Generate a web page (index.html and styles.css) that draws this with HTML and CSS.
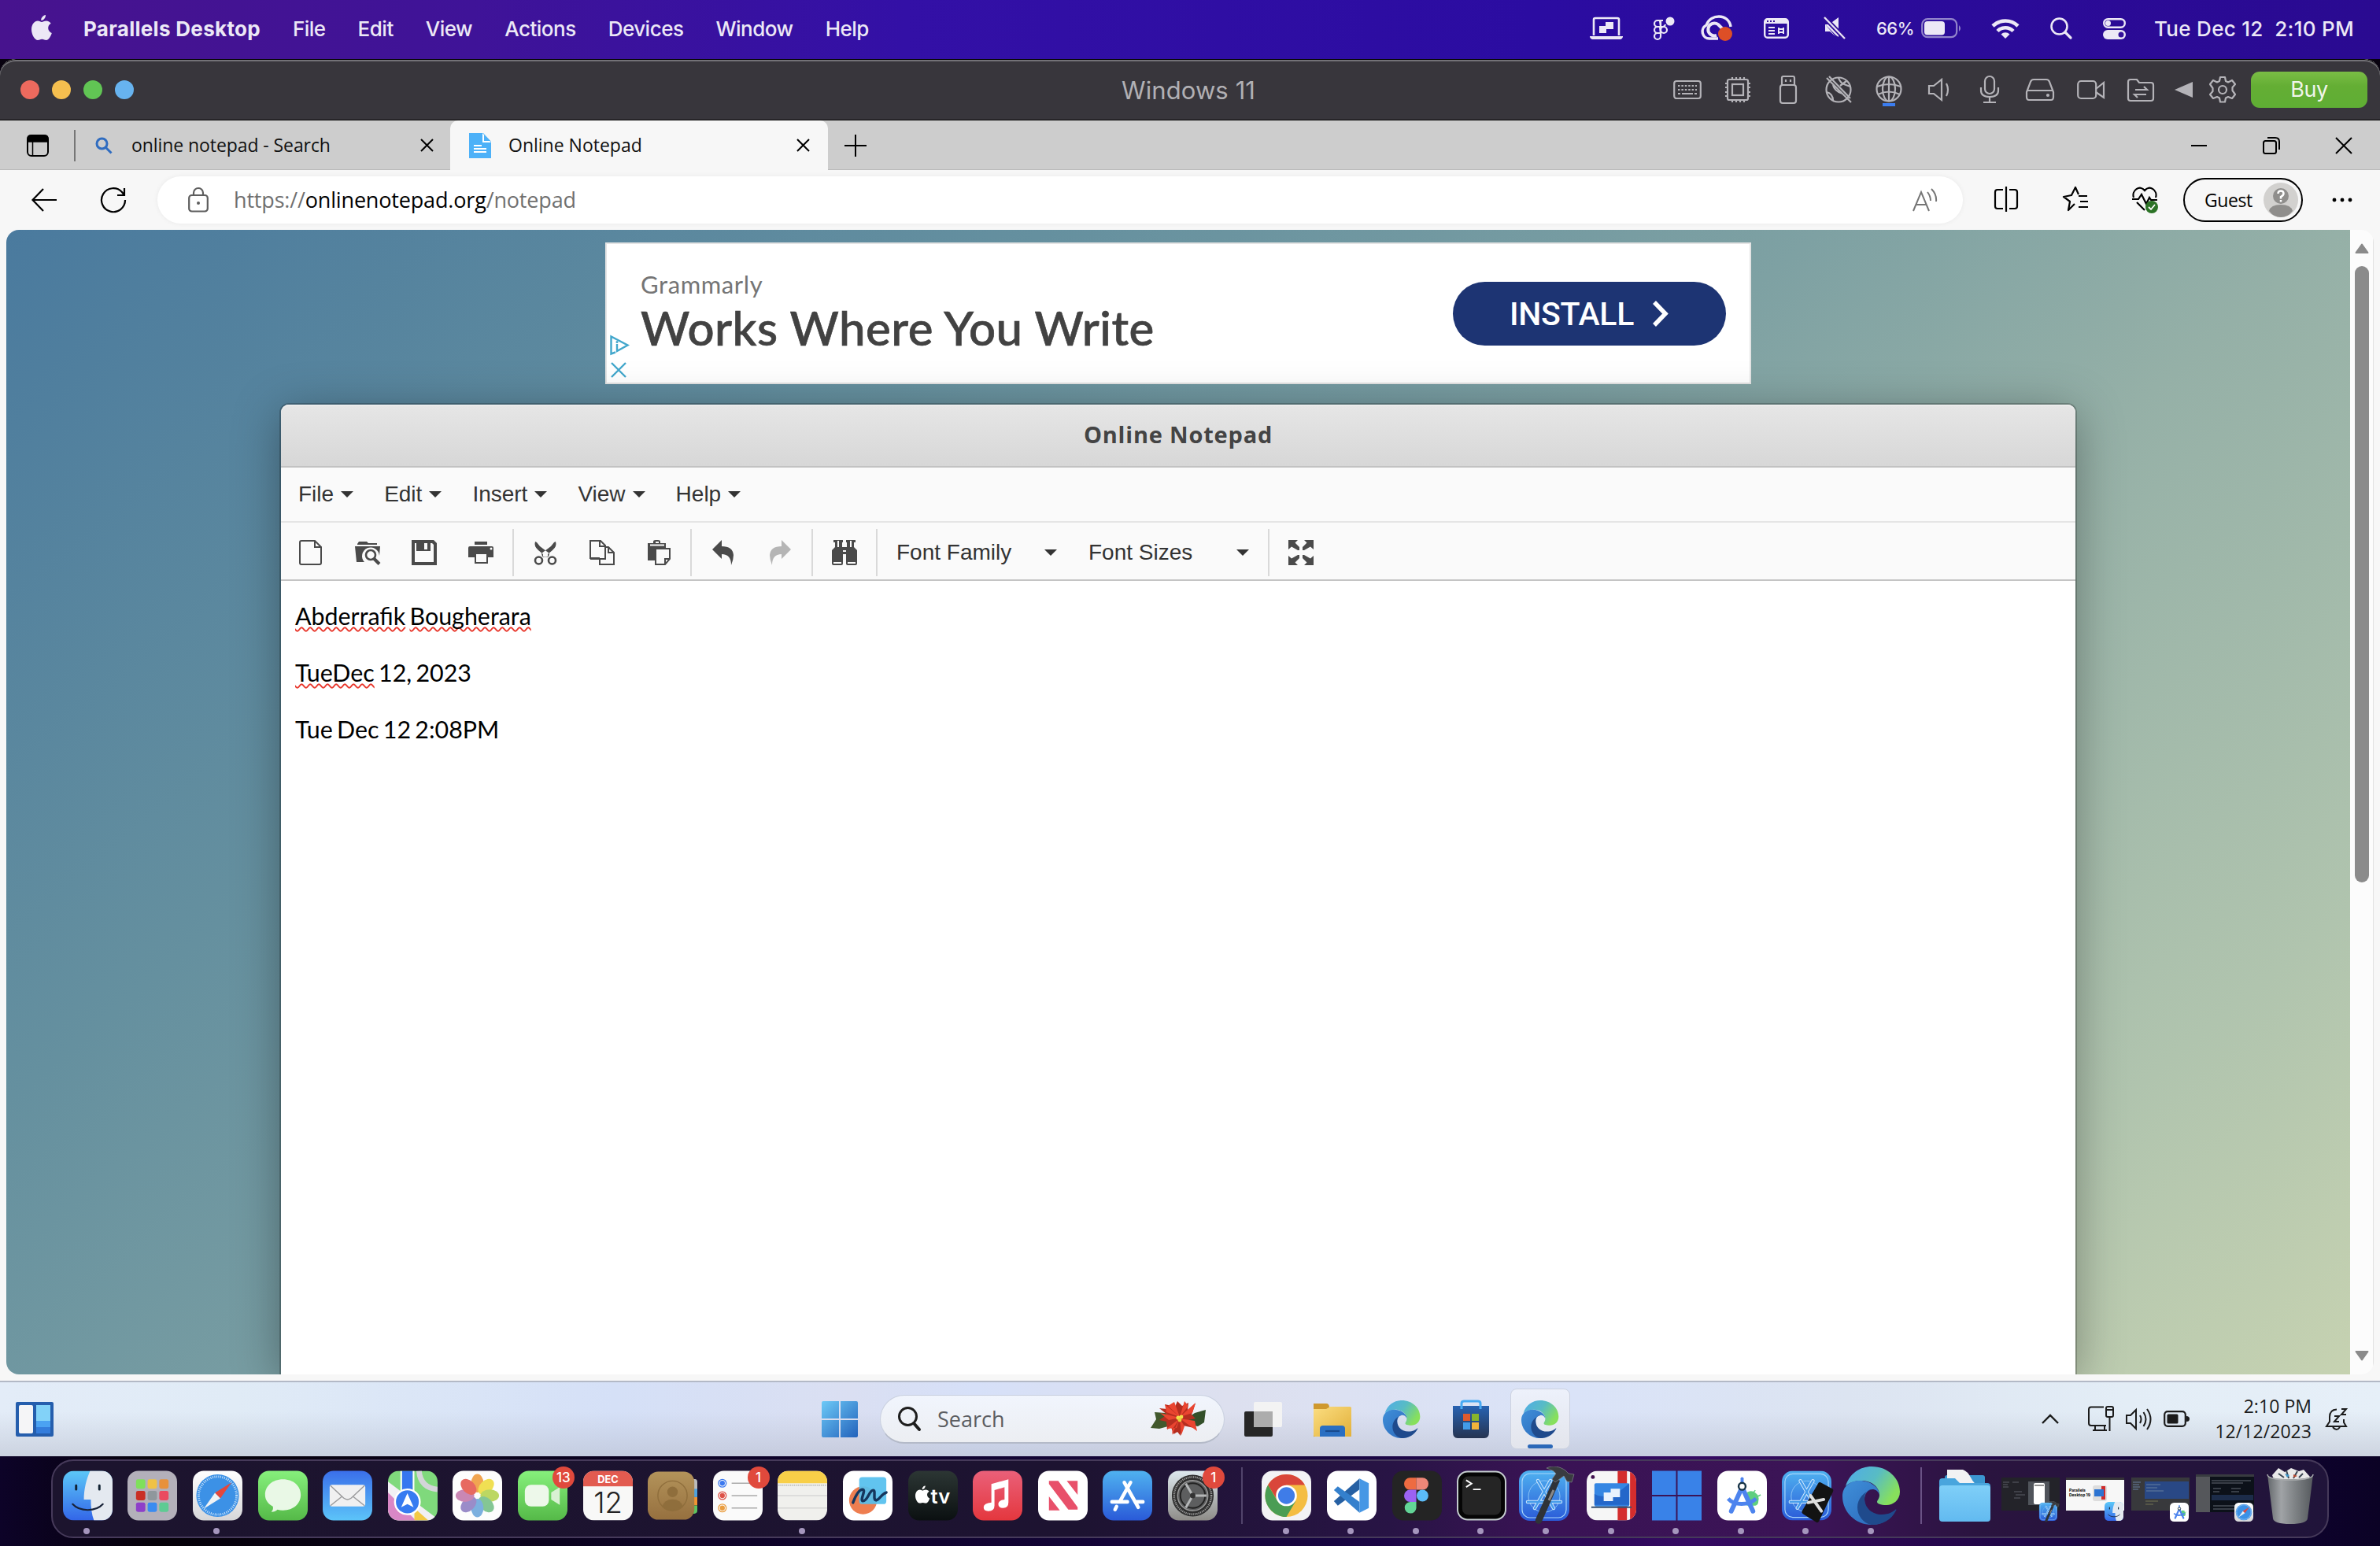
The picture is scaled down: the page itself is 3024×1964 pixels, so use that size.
FILE: index.html
```html
<!DOCTYPE html>
<html lang="en">
<head>
<meta charset="utf-8">
<title>Parallels Desktop - Windows 11</title>
<link rel="stylesheet" href="styles.css">
</head>
<body>
<svg class="defs" width="0" height="0" aria-hidden="true">
  <defs>
    <linearGradient id="gFinder" x1="0" y1="0" x2="0" y2="1"><stop offset="0" stop-color="#5cc8f8"/><stop offset="1" stop-color="#3366e8"/></linearGradient>
    <linearGradient id="gWhite" x1="0" y1="0" x2="0" y2="1"><stop offset="0" stop-color="#fff"/><stop offset="1" stop-color="#d6d6d8"/></linearGradient>
    <linearGradient id="gGreen" x1="0" y1="0" x2="0" y2="1"><stop offset="0" stop-color="#86f07c"/><stop offset="1" stop-color="#55b948"/></linearGradient>
    <linearGradient id="gMail" x1="0" y1="0" x2="0" y2="1"><stop offset="0" stop-color="#3a6fea"/><stop offset="1" stop-color="#5cc4f9"/></linearGradient>
    <linearGradient id="gStore" x1="0" y1="0" x2="0" y2="1"><stop offset="0" stop-color="#4fb2f0"/><stop offset="1" stop-color="#2a5ad8"/></linearGradient>
    <linearGradient id="gMusic" x1="0" y1="0" x2="0" y2="1"><stop offset="0" stop-color="#ea6079"/><stop offset="1" stop-color="#e4373e"/></linearGradient>
    <linearGradient id="gTv" x1="0" y1="0" x2="0" y2="1"><stop offset="0" stop-color="#2c3634"/><stop offset="1" stop-color="#0b1011"/></linearGradient>
    <linearGradient id="gBrown" x1="0" y1="0" x2="0" y2="1"><stop offset="0" stop-color="#b3935a"/><stop offset="1" stop-color="#96703f"/></linearGradient>
    <linearGradient id="gGear" x1="0" y1="0" x2="0" y2="1"><stop offset="0" stop-color="#dde8ee"/><stop offset="1" stop-color="#8e8c88"/></linearGradient>
    <linearGradient id="gWin" x1="0" y1="0" x2="1" y2="1"><stop offset="0" stop-color="#6cc9f7"/><stop offset="1" stop-color="#2362bb"/></linearGradient>
    <linearGradient id="gEdgeTop" x1="0" y1="0" x2="1" y2=".5"><stop offset="0" stop-color="#4fabea"/><stop offset=".55" stop-color="#58bcc4"/><stop offset="1" stop-color="#87e05c"/></linearGradient>
    <linearGradient id="gEdgeLow" x1="0" y1="0" x2="1" y2="1"><stop offset="0" stop-color="#3f8fd9"/><stop offset="1" stop-color="#2a66b8"/></linearGradient>
    <linearGradient id="gFolder" x1="0" y1="0" x2="0" y2="1"><stop offset="0" stop-color="#7fcff8"/><stop offset="1" stop-color="#62baf0"/></linearGradient>
    <linearGradient id="gTrash" x1="0" y1="0" x2="1" y2="0"><stop offset="0" stop-color="#63676b"/><stop offset=".3" stop-color="#a0a3a6"/><stop offset=".6" stop-color="#7f8386"/><stop offset="1" stop-color="#55595d"/></linearGradient>
    <linearGradient id="gYellow" x1="0" y1="0" x2="1" y2="1"><stop offset="0" stop-color="#fbdd80"/><stop offset="1" stop-color="#e2b03a"/></linearGradient>
    <linearGradient id="gBag" x1="0" y1="0" x2="0" y2="1"><stop offset="0" stop-color="#2762b2"/><stop offset="1" stop-color="#263451"/></linearGradient>
    <clipPath id="tile"><rect width="64" height="64" rx="14"/></clipPath>
  </defs>
  <symbol id="i-finder" viewBox="0 0 64 64"><g clip-path="url(#tile)"><rect width="64" height="64" fill="url(#gFinder)"/><path d="M35 0C30 12 27 24 27 37h9c0 10 1 19 4 27h24V0z" fill="#e4e9f0"/></g><path d="M17 19v5M47 19v5" stroke="#123" stroke-width="3" stroke-linecap="round"/><path d="M12.500 43c9 10 30 10 39 0" fill="none" stroke="#182238" stroke-width="2.200" stroke-linecap="round"/></symbol>
  <symbol id="i-safari" viewBox="0 0 64 64"><rect width="64" height="64" rx="14" fill="url(#gWhite)"/><circle cx="32" cy="32" r="27.500" fill="#3c91e6"/><circle cx="32" cy="32" r="24.500" fill="none" stroke="#cfe6fb" stroke-width="3" stroke-dasharray="1 1.570"/><path d="M50 15 35.500 35.500 28.500 28.500z" fill="#e4473c"/><path d="M14 49 28.500 28.500 35.500 35.500z" fill="#f1f3f5"/></symbol>
  <symbol id="i-edge" viewBox="0 0 74 74"><path d="M4 25C9 9 22 0 37 0c21 0 36 15 36 32 0 11-9 17-17 17-8 0-12-2-12-4 0-2 3-4 3-9 0-8-8-18-23-18-9 0-16 3-20 7z" fill="url(#gEdgeTop)"/><path d="M0 38C0 25 10 18 22 18c14 0 25 9 25 18-2-6-6-7-9-7-6 0-10 6-10 13 0 14 10 24 24 24 3 0 6-1 8-2-6 7-14 10-23 10C17 74 0 58 0 38z" fill="url(#gEdgeLow)"/><path d="M28 40c0 13 10 21 22 21 9 0 15-4 17-6 1-1 2 0 1 1-6 12-17 18-31 18-11-2-18-12-18-22 0-11 8-20 19-23-6 0-10 5-10 11z" fill="#1f4a8c"/></symbol>
  <symbol id="i-xblue" viewBox="0 0 64 64"><rect width="64" height="64" rx="14" fill="url(#gStore)"/><rect x="4" y="4" width="56" height="56" rx="10" fill="none" stroke="#a8d6fa" stroke-width="1.200"/><circle cx="32" cy="33" r="20" fill="none" stroke="#8ac2f5"/><path d="M24 13l20 35M40 13 20 48M11 40h42" stroke="#cfe8fd" stroke-width="4.500" stroke-linecap="round"/><path d="M24 13l20 35M40 13 20 48M11 40h42" stroke="#469ceb" stroke-width="2.500" stroke-linecap="round"/></symbol>
  <symbol id="i-xcode" viewBox="0 0 74 74"><use href="#i-xblue" x="2" y="5" width="64" height="64"/><path d="M47 14 23 67c-2 6 6 8 8 3L54 18z" fill="#2f3338"/><path d="M46 30 40 43" stroke="#888" stroke-width="3"/><path d="M37 2c8-4 17-2 24 3l4 4 7 1-3 10-6-1-4-7-11 8-4-4 5-7c-3-4-7-5-12-7z" fill="#393c40" stroke="#83868a" stroke-width=".7"/></symbol>
  <symbol id="i-android" viewBox="0 0 64 64"><rect width="64" height="64" rx="14" fill="#fff"/><path d="M38 28a10 10 0 0 1 15 11c0 3-1 5-4 6L38 45z" fill="#5fcf80"/><path d="M46 29l3-4M52 33l4-2" stroke="#5fcf80" stroke-width="1.500"/><path d="M32 21 18 52M32 21l14 31" stroke="#4d84ee" stroke-width="6" stroke-linecap="round"/><path d="M14 36c8 9 26 9 36 0" fill="none" stroke="#4d84ee" stroke-width="5"/><path d="M32 10v6" stroke="#4d84ee" stroke-width="4" stroke-linecap="round"/><circle cx="32" cy="20" r="4.500" fill="#fff" stroke="#183447" stroke-width="2.500"/></symbol>
  <symbol id="i-apple" viewBox="0 0 26 32"><path d="M18 0c.3 3.400-2.600 7-5.700 7C11.800 3.800 15 .4 18 0zM13 9c1.200 0 3-1.500 5.800-1.500 2.500 0 4.700 1.300 5.900 3.200-5.200 3-4.300 10 1.100 12.200C24.700 26.500 21.700 32 18.700 32c-2 0-2.900-1.300-5.300-1.300S10 32 8 32C4.300 32 0 25 0 18.500c0-6.800 4-11 8-11 2.300 0 3.800 1.500 5 1.500z" fill="currentColor"/></symbol>
  <symbol id="i-caret" viewBox="0 0 16 8"><path d="M0 0h16L8 8z" fill="#333"/></symbol>
</svg>

<header class="menubar">
  <svg class="apple" width="26" height="32"><use href="#i-apple"/></svg>
  <nav class="mac-menus"><b>Parallels Desktop</b><span>File</span><span>Edit</span><span>View</span><span>Actions</span><span>Devices</span><span>Window</span><span>Help</span></nav>
  <div class="mac-status">
    <svg width="42" height="28" viewBox="0 0 42 28"><path d="M5 23V3q0-2 2-2h28q2 0 2 2v20" fill="none" stroke="#ece8f6" stroke-width="2.600"/><path d="M0 24h42v1q-1 3-3 3H3q-2 0-3-3z" fill="#ece8f6"/><path d="M20 6h10v9h-9v5h-9v-9h8z" fill="#ece8f6"/></svg>
    <svg width="28" height="30" viewBox="0 0 28 30"><g fill="none" stroke="#ece8f6" stroke-width="2.200"><path d="M9 5H6a4 4 0 0 0 0 8h4zM9 13H6a4 4 0 0 0 0 8h4zM10 21H6a4 4 0 1 0 4 4zM10 5h3M10 13h3a4 4 0 0 0 3-3M10 5v20"/><circle cx="14" cy="17" r="4"/></g><circle cx="22" cy="6" r="5.500" fill="#ece8f6"/></svg>
    <svg width="42" height="34" viewBox="0 0 42 34"><path d="M22 30H11a9 9 0 0 1-4-17C10 5 17 2 23 2c8 0 14 5 15 13" fill="none" stroke="#ece8f6" stroke-width="3.500"/><path d="M20 26a8 8 0 1 1 2-14l9 9" fill="none" stroke="#ece8f6" stroke-width="4"/><circle cx="31" cy="24" r="9" fill="#dd4f26"/></svg>
    <svg width="32" height="26" viewBox="0 0 32 26"><rect x="1.200" y="1.200" width="29.600" height="23.600" rx="3.500" fill="none" stroke="#ece8f6" stroke-width="2.400"/><path d="M1 2h30v5H1z" fill="#ece8f6"/><path d="M4 4h2m2 0h2m2 0h2" stroke="#33109a" stroke-width="2"/><path d="M6 12h8M6 16h8M6 20h8M19 12v8M25 12v8M18 14h8M18 18h8" stroke="#ece8f6" stroke-width="2"/></svg>
    <svg width="30" height="28" viewBox="0 0 30 28"><path d="M3 9h5L20 0v25l-3-2L3 9zM3 9v9h6l7 6" fill="#ece8f6"/><path d="M2 0l26 27" stroke="#33109a" stroke-width="6"/><path d="M2 0l26 27" stroke="#ece8f6" stroke-width="2.200"/></svg>
    <span class="pct">66%</span>
    <svg width="52" height="26" viewBox="0 0 52 26"><rect x="1.200" y="1.200" width="44" height="23" rx="7" fill="none" stroke="#9284cb" stroke-width="2.200"/><rect x="4" y="4" width="26" height="17.500" rx="4" fill="#ece8f6"/><path d="M48 9q4 4 0 8z" fill="#9284cb"/></svg>
    <svg width="36" height="26" viewBox="0 0 36 26"><g fill="none" stroke="#ece8f6" stroke-width="4.600"><path d="M2 10a23 23 0 0 1 32 0M8 16.500a14 14 0 0 1 20 0"/></g><path d="M12.500 20.500a8 8 0 0 1 11 0L18 26z" fill="#ece8f6"/></svg>
    <svg width="28" height="28" viewBox="0 0 28 28"><circle cx="11.500" cy="11.500" r="10" fill="none" stroke="#ece8f6" stroke-width="2.600"/><path d="M19 19l7 7" stroke="#ece8f6" stroke-width="3.200" stroke-linecap="round"/></svg>
    <svg width="29" height="27" viewBox="0 0 29 27"><rect x="1.200" y="1.200" width="26.600" height="10.500" rx="5.200" fill="none" stroke="#ece8f6" stroke-width="2.400"/><circle cx="6.500" cy="6.500" r="3.500" fill="#ece8f6"/><rect y="15" width="29" height="12" rx="6" fill="#ece8f6"/><circle cx="23" cy="21" r="3.500" fill="#33109a"/></svg>
    <span class="clock">Tue Dec 12&nbsp; 2:10 PM</span>
  </div>
</header>

<main class="vm">
  <div class="vm-title">
    <div class="lights"><i class="r"></i><i class="y"></i><i class="g"></i><i class="b"></i></div>
    <span class="vm-name">Windows 11</span>
    <div class="vm-tools">
      <svg viewBox="0 0 36 36"><rect x="1.200" y="7" width="33.600" height="22" rx="3" /><path d="M6 13h24M6 18h24" stroke-dasharray="2.500 1.900"/><path d="M6 23h3M11 23h14M27 23h3"/></svg>
      <svg viewBox="0 0 36 36"><rect x="5" y="5" width="26" height="26" rx="2"/><rect x="11" y="11" width="14" height="14"/><path d="M11 2v3M16 2v3M21 2v3M26 2v3M11 31v3M16 31v3M21 31v3M26 31v3M2 10h3M2 15h3M2 21h3M2 26h3M31 10h3M31 15h3M31 21h3M31 26h3"/></svg>
      <svg viewBox="0 0 36 36"><rect x="8" y="12" width="20" height="23" rx="3"/><path d="M10 12V3q0-2 2-2h12q2 0 2 2v9M15 5v3M21 5v3"/></svg>
      <svg viewBox="0 0 36 36"><circle cx="18" cy="18" r="15.500"/><path d="M3 3l31 31M6 1l27 28M18 3q2 6 7 8t8 3M11 12q2 8 12 11M3 21q8 2 8 11M20 13l8-6"/></svg>
      <svg viewBox="0 0 36 36"><circle cx="18" cy="17" r="15.500"/><ellipse cx="18" cy="17" rx="8" ry="15.500"/><path d="M18 2v30M3 14q15-6 30 0M4 24q14-7 28 0"/><path d="M10 37h16" stroke="#3b7df0" stroke-width="4"/></svg>
      <svg viewBox="0 0 36 36"><path d="M5 13h6l10-8v26l-10-8H5zM27 10q4 8 0 16"/></svg>
      <svg viewBox="0 0 36 36"><rect x="12" y="1" width="12" height="22" rx="6"/><path d="M7 15v4q0 8 11 8t11-8v-4M18 27v6M10 34h16"/></svg>
      <svg viewBox="0 0 36 36"><path d="M1 21 6 8q1-3 4-3h16q3 0 4 3l5 13v6q0 4-3 4H4q-3 0-3-4zM1 19h34"/><circle cx="28" cy="25" r="1"/></svg>
      <svg viewBox="0 0 36 36"><rect x="2.200" y="7" width="23" height="22" rx="4"/><path d="M25 17l10-8v19l-10-7"/></svg>
      <svg viewBox="0 0 36 36"><path d="M2 8q0-3 3-3h8l3 4h15q3 0 3 3v17q0 3-3 3H5q-3 0-3-3zM11 18h15l-4-4M25 24H10l4 4"/></svg>
    </div>
    <svg class="tri" width="23" height="20" viewBox="0 0 23 20"><path d="M0 10 23 0v20z" fill="#b4b3b8"/></svg>
    <svg class="gear" width="36" height="36" viewBox="0 0 36 36"><path d="M15 2h6l1 5 3 1.500 5-2.500 4 5-3.500 4v4L34 24l-4 5-5-2-3 1.500-1 5h-6l-1-5-3-1.500-5 2-4-5 3.500-4v-4L2 11l4-5 5 2.500L14 7z" fill="none" stroke="#b4b3b8" stroke-width="2.200" stroke-linejoin="round"/><circle cx="18" cy="18" r="5" fill="none" stroke="#b4b3b8" stroke-width="2.200"/></svg>
    <button class="buy">Buy</button>
  </div>

  <div class="tabs">
    <svg class="tab-actions" width="28" height="28" viewBox="0 0 28 28"><rect x="1" y="1" width="26" height="26" rx="5" fill="none" stroke="#000" stroke-width="2"/><path d="M1 9V5q0-4 4-4h18q4 0 4 4v4zM7.500 9v18" stroke="#000" stroke-width="1.500"/></svg>
    <div class="tab-sep"></div>
    <div class="tab idle">
      <svg width="22" height="22" viewBox="0 0 22 22"><circle cx="8.500" cy="8.500" r="6.500" fill="none" stroke="#2f6cc0" stroke-width="3"/><path d="M13 13l7.500 7.500" stroke="#2f6cc0" stroke-width="3"/></svg>
      <span>online notepad - Search</span>
      <svg class="x" width="17" height="17" viewBox="0 0 17 17"><path d="M1 1l15 15M16 1 1 16" stroke="#000" stroke-width="2"/></svg>
    </div>
    <div class="tab active">
      <svg width="30" height="32" viewBox="0 0 30 32"><path d="M1 0h18l10 11v21H1z" fill="#4db1f8"/><path d="M18 0v12h11" fill="#fff"/><path d="M20 2l8 8h-8z" fill="#4db1f8"/><path d="M7 16h10M7 20h16M7 24h16" stroke="#fff" stroke-width="2"/></svg>
      <span>Online Notepad</span>
      <svg class="x" width="17" height="17" viewBox="0 0 17 17"><path d="M1 1l15 15M16 1 1 16" stroke="#000" stroke-width="2"/></svg>
    </div>
    <svg class="plus" width="28" height="28" viewBox="0 0 28 28"><path d="M14 0v28M0 14h28" stroke="#000" stroke-width="2"/></svg>
    <div class="win-buttons">
      <svg width="22" height="22" viewBox="0 0 22 22"><path d="M1 11h20" stroke="#000" stroke-width="2"/></svg>
      <svg width="22" height="22" viewBox="0 0 22 22"><rect x="1" y="5" width="16" height="16" rx="2.500" fill="none" stroke="#000" stroke-width="2"/><path d="M6 1h10q5 0 5 5v10" fill="none" stroke="#000" stroke-width="2"/></svg>
      <svg width="22" height="22" viewBox="0 0 22 22"><path d="M1 1l20 20M21 1 1 21" stroke="#000" stroke-width="2"/></svg>
    </div>
  </div>

  <div class="address">
    <svg class="nav" width="32" height="30" viewBox="0 0 32 30"><path d="M15 1 1.500 15 15 29M2 15h30" fill="none" stroke="#000" stroke-width="2.200"/></svg>
    <svg class="nav2" width="32" height="32" viewBox="0 0 32 32"><path d="M31 16A15 15 0 1 1 27 6l3 4M30 1v9h-9" fill="none" stroke="#000" stroke-width="2.200"/></svg>
    <div class="url">
      <svg width="26" height="32" viewBox="0 0 26 32"><rect x="1.200" y="10" width="23.600" height="20.500" rx="3.500" fill="none" stroke="#5e5e5e" stroke-width="2.200"/><path d="M7 10V7a6 6 0 0 1 12 0v3" fill="none" stroke="#5e5e5e" stroke-width="2.200"/><circle cx="13" cy="20" r="2" fill="#5e5e5e"/></svg>
      <span>https://<em>onlinenotepad.org</em>/notepad</span>
      <svg class="read" width="32" height="30" viewBox="0 0 32 30"><path d="M1 29 11 5l10 24M5 21h12M19 5q4 5 4 11M24 1q7 7 6 16" fill="none" stroke="#757575" stroke-width="2"/></svg>
    </div>
    <div class="edge-tools">
      <svg width="32" height="32" viewBox="0 0 32 32"><path d="M12 4H5Q2 4 2 7v18q0 3 3 3h7M20 4h7q3 0 3 3v18q0 3-3 3h-7M16 0v32" fill="none" stroke="#000" stroke-width="2.200"/></svg>
      <svg width="32" height="32" viewBox="0 0 32 32"><path d="M20 12h11M22 19h10M20 26h12M15 22l-8 8 2-11-8-6 10-2 5-10 4 9" fill="none" stroke="#000" stroke-width="2.200" stroke-linejoin="round"/></svg>
      <svg width="34" height="34" viewBox="0 0 34 34"><path d="M2 14C-1 5 10-3 16 5c6-8 17 0 14 9M6 20l10 10M0 16h8l4-6 6 12 4-8 2 3h8" fill="none" stroke="#000" stroke-width="2.200"/><circle cx="25" cy="26" r="8" fill="#2c7326"/><path d="M21 26l3 3 5-6" fill="none" stroke="#fff" stroke-width="1.800"/></svg>
    </div>
    <div class="guest"><span>Guest</span><svg width="44" height="44" viewBox="0 0 44 44"><circle cx="22" cy="22" r="22" fill="#d2d1cf"/><circle cx="22" cy="17" r="10" fill="#8f8e8c"/><path d="M7 36q2-8 15-8t15 8q-6 8-15 8T7 36z" fill="#8f8e8c"/><path d="M18.500 14q0-3.500 3.500-3.500t3.500 3.500q0 2-3.500 4v2.500M22 22v2.500" fill="none" stroke="#fff" stroke-width="2.500"/></svg></div>
    <svg class="dots" width="26" height="6" viewBox="0 0 26 6"><circle cx="3" cy="3" r="2.400"/><circle cx="13" cy="3" r="2.400"/><circle cx="23" cy="3" r="2.400"/></svg>
  </div>

  <div class="viewport">
    <div class="page">
      <div class="ad">
        <div class="ad-choice">
          <svg width="24" height="25" viewBox="0 0 24 25"><path d="M7 21.500 1.500 23.500v-22l21 11L9 20V11" fill="none" stroke="#42a7cc" stroke-width="2.400"/><circle cx="9" cy="8.500" r="1.500" fill="#42a7cc"/></svg>
          <svg width="20" height="20" viewBox="0 0 20 20"><path d="M1 1l18 18M19 1 1 19" stroke="#42a7cc" stroke-width="2.400"/></svg>
        </div>
        <div class="ad-copy"><span>Grammarly</span><strong>Works Where You Write</strong></div>
        <button class="install"><span>INSTALL</span><svg width="21" height="33" viewBox="0 0 21 33"><path d="M3 2l14 14.500L3 31" fill="none" stroke="#fff" stroke-width="5.500"/></svg></button>
      </div>

      <section class="notepad">
        <h1>Online Notepad</h1>
        <nav class="np-menu">
          <span>File<svg><use href="#i-caret"/></svg></span><span>Edit<svg><use href="#i-caret"/></svg></span><span>Insert<svg><use href="#i-caret"/></svg></span><span>View<svg><use href="#i-caret"/></svg></span><span>Help<svg><use href="#i-caret"/></svg></span>
        </nav>
        <div class="np-tools">
          <div class="grp">
            <svg viewBox="0 0 32 32"><path d="M4 1h17l8 8v20q0 2-2 2H4q-2 0-2-2V3q0-2 2-2zM21 1v8h8" fill="none" stroke="#4a4a4a" stroke-width="2"/></svg>
            <svg viewBox="0 0 32 32"><path d="M3 5 5 2h10l2 2h11v2H3zM0 8h32l-1 12a11 11 0 1 0-19 8H2z" fill="#4a4a4a"/><circle cx="20" cy="19" r="6" fill="none" stroke="#4a4a4a" stroke-width="2.600"/><path d="M24 23.500l7 7" stroke="#4a4a4a" stroke-width="4"/></svg>
            <svg viewBox="0 0 32 32"><path d="M0 0h28l4 4v28H0z" fill="#4a4a4a"/><path d="M4 4h2v10h18V4h2l2 2v22H4z" fill="#fafafa"/><path d="M16 4h4v8h-4z" fill="#fafafa"/></svg>
            <svg viewBox="0 0 32 32"><path d="M8 2h16v4H8zM2 8h28q2 0 2 2v12h-7v8H8v-8H0V10q0-2 2-2z" fill="#4a4a4a"/><path d="M10 18h13v10H10z" fill="#fafafa"/><circle cx="29" cy="11" r="1.500" fill="#fff"/></svg>
          </div>
          <div class="grp">
            <svg viewBox="0 0 32 32"><path d="M3 2q-2 6 4 11l6 5v4l7-1 1-4L9 8 5 3zM29 2q2 6-4 11l-6 5v4l-7-1-1-4L23 8l4-5z" fill="#4a4a4a"/><circle cx="16" cy="17.500" r="2.500" fill="#fafafa"/><ellipse cx="7.500" cy="26" rx="4.500" ry="4.500" fill="none" stroke="#4a4a4a" stroke-width="2.600"/><circle cx="24.500" cy="26" r="4.500" fill="none" stroke="#4a4a4a" stroke-width="2.600"/></svg>
            <svg viewBox="0 0 32 32"><path d="M13 23H1V1h13l6 6v2M13 1v7h7M20 9v15H13v7h18V16l-7-7zM1 24h12M24 9v7h7" fill="none" stroke="#4a4a4a" stroke-width="2"/></svg>
            <svg viewBox="0 0 32 32"><path d="M2 4h7V2q0-2 3-2h3q3 0 3 2v2h7v6H12v16H2z" fill="#4a4a4a"/><path d="M5 6.500h18M12 3h4" stroke="#fafafa" stroke-width="2"/><path d="M14 11h16v13l-6 7H12V11zM30 24h-6v7" fill="#fafafa" stroke="#4a4a4a" stroke-width="2"/></svg>
          </div>
          <div class="grp">
            <svg viewBox="0 0 32 32"><path d="M2 12 14 0v8q14 0 15 11 0 6-3 13 0-14-12-14v6z" fill="#4a4a4a"/></svg>
            <svg viewBox="0 0 32 32"><path d="M30 12 18 0v8Q4 8 3 19q0 6 3 13 0-14 12-14v6z" fill="#b5b5b5"/></svg>
          </div>
          <div class="grp">
            <svg viewBox="0 0 32 32"><path d="M2 0h12v3h-1v6h6V3h-1V0h12v3h-2v6l4 4v17q0 2-2 2H20q-2 0-2-2V18h-4v12q0 2-2 2H2q-2 0-2-2V13l4-4V3H2z" fill="#4a4a4a"/><path d="M14 13h4v2h-4zM2 28h10v2H2zM20 28h10v2H20zM7 1h2v8H7zM23 1h2v8h-2z" fill="#fafafa"/></svg>
          </div>
          <div class="grp selects"><span class="sel fam">Font Family<svg><use href="#i-caret"/></svg></span><span class="sel siz">Font Sizes<svg><use href="#i-caret"/></svg></span></div>
          <div class="grp">
            <svg viewBox="0 0 32 32"><path d="M0 0h12L8.500 3.500 14 9v4H12L4 8.500 0 12zM32 0H20l3.500 3.500L18 9v4h2l8-4.500L32 12zM0 32h12l-3.500-3.500L14 23v-4h-2l-8 4.500L0 20zM32 32H20l3.500-3.500L18 23v-4h2l8 4.500L32 20z" fill="#4a4a4a"/></svg>
          </div>
        </div>
        <div class="np-body">
          <p><u>Abderrafik</u> <u>Bougherara</u></p>
          <p><u>TueDec</u> 12, 2023</p>
          <p>Tue Dec 12 2:08PM</p>
        </div>
      </section>
    </div>
    <div class="scroll">
      <svg width="18" height="13" viewBox="0 0 18 13"><path d="M9 1.500 16.500 12h-15z" fill="#8b8b8b" stroke="#8b8b8b" stroke-width="2" stroke-linejoin="round"/></svg>
      <div class="thumb"></div>
      <svg class="down" width="18" height="13" viewBox="0 0 18 13"><path d="M9 11.500 16.500 1h-15z" fill="#8b8b8b" stroke="#8b8b8b" stroke-width="2" stroke-linejoin="round"/></svg>
    </div>
  </div>

  <footer class="taskbar">
    <div class="widgets"><svg width="48" height="44" viewBox="0 0 48 44"><rect width="48" height="44" rx="2" fill="#255ead"/><rect x="4" y="4" width="18" height="36" rx="2" fill="#f5f5f7"/><path d="M26 4h18v20H26z" fill="#82d2f8"/><path d="M26 24h18v8H26z" fill="#4ba2f2"/><path d="M26 32h18v8H26z" fill="#347ddc"/></svg></div>
    <div class="pins">
      <svg width="46" height="46" viewBox="0 0 46 46"><path d="M2 0h20v22H0V2q0-2 2-2zM24 0h20q2 0 2 2v20H24zM0 24h22v22H2q-2 0-2-2zM24 24h22v20q0 2-2 2H24z" fill="url(#gWin)"/></svg>
      <div class="search">
        <svg width="29" height="31" viewBox="0 0 29 31"><circle cx="12.500" cy="12.500" r="11" fill="none" stroke="#1e1e1e" stroke-width="3"/><path d="M20 21l7 8" stroke="#1e1e1e" stroke-width="4" stroke-linecap="round"/></svg>
        <span>Search</span>
        <svg width="70" height="45" viewBox="0 0 70 45"><path d="M0 34l7-11-2-9 14 1 10 8-7 9-11 3z" fill="#41582c"/><path d="M70 11l-2 16-8 5-10-2-4-8 10-7z" fill="#33502a"/><path d="M18 4l13 3 3-7 6 6 8-4-1 9 10-8-5 14 5 5-9 2 7 10-14-3-3 13-4-5-5 3-3-9-5 3-1-10-9-2 10-7-10-8 10 1z" fill="#b52e20"/><path d="M37 20 30 1l-8 5zM37 20 43 0l5 6zM37 20 57 2l-4 13zM37 21 12 15l11 9zM37 22l22 16-3-13zM37 22 20 35l13-1zM37 22l2 21 4-11zM37 22l-10 21 1-8zM37 20 18 4l2 10z" fill="#ea4530"/><circle cx="35" cy="21" r="2.600" fill="#f3e04a"/><circle cx="39" cy="20" r="2.400" fill="#f3e04a"/><circle cx="37" cy="24" r="2.400" fill="#e5cf3b"/></svg>
      </div>
      <svg width="48" height="44" viewBox="0 0 48 44"><rect y="12" width="36" height="32" rx="2" fill="#262626"/><rect x="12" width="36" height="32" rx="2" fill="#f3f3f3"/><path d="M12 12h24v20H12z" fill="#acacac"/></svg>
      <svg width="48" height="44" viewBox="0 0 48 44"><path d="M0 2h16q4 0 4 5h28v37H0z" fill="#cf982d"/><path d="M0 9h16l5-3h25q2 0 2 2v36H2q-2 0-2-2z" fill="url(#gYellow)"/><path d="M8 44V34q0-4 4-4h24q4 0 4 4v10z" fill="#2a6fc2"/><path d="M15 37h18" stroke="#174a8e" stroke-width="2.200"/></svg>
      <svg width="48" height="48"><use href="#i-edge"/></svg>
      <svg width="46" height="48" viewBox="0 0 46 48"><path d="M0 7h46v33q0 8-6 8H6q-6 0-6-8z" fill="url(#gBag)"/><path d="M11 11V4q0-3 3-3h18q3 0 3 3v7" fill="none" stroke="#48a9f3" stroke-width="3"/><path d="M13 17h9v9h-9z" fill="#df5a2d"/><path d="M24 17h9v9h-9z" fill="#87b52c"/><path d="M13 28h9v9h-9z" fill="#439ce8"/><path d="M24 28h9v9h-9z" fill="#f0b43b"/></svg>
      <div class="pin-active"><svg width="48" height="48"><use href="#i-edge"/></svg><i></i></div>
    </div>
    <div class="tray">
      <svg width="22" height="12" viewBox="0 0 22 12"><path d="M1 11 11 1l10 10" fill="none" stroke="#1b1b1b" stroke-width="2.400"/></svg>
      <svg class="mon" width="33" height="33" viewBox="0 0 33 33"><path d="M20 1.500H4q-3 0-3 3V22q0 3 3 3h19M9 25v5M21 25v5M6 31h18M27.500 14v18M23 3q0-2 2-2h5q2 0 2 2v9q0 2-2 2h-5q-2 0-2-2zM23 5h9" fill="none" stroke="#1b1b1b" stroke-width="2"/></svg>
      <svg width="34" height="28" viewBox="0 0 34 28"><path d="M1 9h5l7-7v24l-7-7H1zM18 9q3 5 0 10M22.500 5q6 9 0 18M27 1q9 13 0 26" fill="none" stroke="#1b1b1b" stroke-width="2"/></svg>
      <svg width="33" height="21" viewBox="0 0 33 21"><rect x="1.200" y="1.200" width="26.600" height="18.600" rx="4" fill="none" stroke="#1b1b1b" stroke-width="2.200"/><rect x="4.500" y="4.500" width="14" height="12" rx="1.500" fill="#1b1b1b"/><path d="M29 7q4 0 4 3.500T29 14z" fill="#1b1b1b"/></svg>
      <div class="time"><span>2:10 PM</span><span>12/12/2023</span></div>
      <svg width="28" height="30" viewBox="0 0 28 30"><path d="M14 2.500Q5 3 5 12v6l-4 6h25l-3-5v-4M9 25q5 6 9 0M11 11h6l-6 7h6M20 2h6l-6 7h6" fill="none" stroke="#1b1b1b" stroke-width="2"/></svg>
    </div>
  </footer>
</main>

<footer class="dock-area">
  <div class="dock">
    <div class="app on"><svg><use href="#i-finder"/></svg></div>
    <div class="app"><svg viewBox="0 0 64 64"><rect width="64" height="64" rx="14" fill="#b3b0ba"/><g><rect x="11" y="11" width="12" height="12" rx="2.500" fill="#7fe05b"/><rect x="26" y="11" width="12" height="12" rx="2.500" fill="#f0c244"/><rect x="41" y="11" width="12" height="12" rx="2.500" fill="#e8913a"/><rect x="11" y="26" width="12" height="12" rx="2.500" fill="#c92f25"/><rect x="26" y="26" width="12" height="12" rx="2.500" fill="#8f979c"/><rect x="41" y="26" width="12" height="12" rx="2.500" fill="#ea4a60"/><rect x="11" y="41" width="12" height="12" rx="2.500" fill="#8e3fc9"/><rect x="26" y="41" width="12" height="12" rx="2.500" fill="#3a8bf0"/><rect x="41" y="41" width="12" height="12" rx="2.500" fill="#5ecb93"/></g></svg></div>
    <div class="app on"><svg><use href="#i-safari"/></svg></div>
    <div class="app"><svg viewBox="0 0 64 64"><rect width="64" height="64" rx="14" fill="url(#gGreen)"/><path d="M32 11c14 0 23 9 23 20S46 51 32 51q-4 0-7-1-3 3-8 3 3-3 2-7C12 42 9 37 9 31 9 20 18 11 32 11z" fill="#e9f8e6"/></svg></div>
    <div class="app"><svg viewBox="0 0 64 64"><rect width="64" height="64" rx="14" fill="url(#gMail)"/><rect x="9" y="18" width="46" height="28" rx="3" fill="#f0f0f1"/><path d="M10 19l17 16q5 4 10 0l17-16M10 45l15-12M54 45 39 33" fill="none" stroke="#9a9a9c" stroke-width="1.500"/></svg></div>
    <div class="app"><svg viewBox="0 0 64 64"><g clip-path="url(#tile)"><rect width="64" height="64" fill="#7fd97c"/><path d="M0 14 64 62v10H0z" fill="#f1f0f4"/><path d="M0 28l40 40H0z" fill="#d987c6"/><path d="M34 64V48l18 16z" fill="#f3c945"/><path d="M40 0q2 22 24 24" fill="none" stroke="#d3d5d8" stroke-width="7"/><path d="M18 0h14v30H18z" fill="#3676f0"/><path d="M17 0v28M33 0v28" stroke="#fff" stroke-width="2"/></g><circle cx="25" cy="40" r="16" fill="#377bf1" stroke="#fff" stroke-width="2.500"/><path d="M25 29l8 18-8-4-8 4z" fill="#fff"/></svg></div>
    <div class="app"><svg viewBox="0 0 64 64"><rect width="64" height="64" rx="14" fill="#fdfdfd"/><g transform="translate(32 32)" opacity=".88"><ellipse cy="-16" rx="8" ry="12" fill="#f0993a"/><ellipse cy="-16" rx="8" ry="12" fill="#efdc3c" transform="rotate(45)"/><ellipse cy="-16" rx="8" ry="12" fill="#b4d24d" transform="rotate(90)"/><ellipse cy="-16" rx="8" ry="12" fill="#74bf86" transform="rotate(135)"/><ellipse cy="-16" rx="8" ry="12" fill="#6ba6dc" transform="rotate(180)"/><ellipse cy="-16" rx="8" ry="12" fill="#8d7dc2" transform="rotate(225)"/><ellipse cy="-16" rx="8" ry="12" fill="#c277ab" transform="rotate(270)"/><ellipse cy="-16" rx="8" ry="12" fill="#e5564c" transform="rotate(315)"/></g></svg></div>
    <div class="app"><svg viewBox="0 0 64 64"><rect width="64" height="64" rx="14" fill="url(#gGreen)"/><rect x="9" y="18" width="31" height="28" rx="8" fill="#edf8ea"/><path d="M43 28l11-7v23l-11-7z" fill="#d9f1d3"/></svg><b class="badge">13</b></div>
    <div class="app"><svg viewBox="0 0 64 64"><g clip-path="url(#tile)"><rect width="64" height="64" fill="#f8f8f7"/><rect width="64" height="20" fill="#e25b50"/></g><text x="32" y="15.500" font-size="13" font-weight="700" text-anchor="middle" fill="#fff">DEC</text><text x="32" y="54" font-size="37" font-weight="300" text-anchor="middle" fill="#222">12</text></svg></div>
    <div class="app"><svg viewBox="0 0 66 64"><path d="M58 10h5q3 0 3 4v10h-8z" fill="#bcbcbc"/><path d="M60 23h6v11h-6z" fill="#4fa2dd"/><path d="M60 34h6v11h-6z" fill="#f19432"/><path d="M60 45h6v7q0 4-4 4h-2z" fill="#5fc35f"/><rect width="62" height="64" rx="14" fill="url(#gBrown)"/><g fill="#8f6e3c"><circle cx="33" cy="27" r="7"/><path d="M19 47q3-10 14-10t14 10q-6 6-14 6t-14-6z"/></g><circle cx="33" cy="32" r="19.500" fill="none" stroke="#8f6e3c" stroke-width="1.500"/></svg></div>
    <div class="app"><svg viewBox="0 0 64 64"><rect width="64" height="64" rx="14" fill="#fafafa"/><g stroke="#aaa" stroke-width="1.400"><path d="M24 16h33M24 32h33M24 48h33"/></g><g fill="none" stroke-width="1.300"><circle cx="12" cy="16" r="5" stroke="#3b78ef"/><circle cx="12" cy="32" r="5" stroke="#dd5147"/><circle cx="12" cy="48" r="5" stroke="#ea9d3f"/></g><circle cx="12" cy="16" r="3.200" fill="#3b78ef"/><circle cx="12" cy="32" r="3.200" fill="#dd5147"/><circle cx="12" cy="48" r="3.200" fill="#ea9d3f"/></svg><b class="badge">1</b></div>
    <div class="app on"><svg viewBox="0 0 64 64"><g clip-path="url(#tile)"><rect width="64" height="64" fill="#f0f0ed"/><rect width="64" height="16" fill="#f8cf48"/></g><path d="M1 18.500h62" stroke="#b5b5b0" stroke-width="1.500" stroke-dasharray="1.500 1"/><path d="M0 32h64M0 48h64" stroke="#d6d6d6" stroke-width="1.500"/></svg></div>
    <div class="app"><svg viewBox="0 0 64 64"><rect width="64" height="64" rx="14" fill="#fff"/><circle cx="26" cy="38" r="18" fill="#ee7e50"/><rect x="21" y="8" width="35" height="35" rx="4" fill="#55bfee" opacity=".93"/><path d="M13 41q6-16 12-17c6 0-4 14 1 15 6 0 8-14 13-14 4 0-1 13 4 13 5-1 6-8 13-10" fill="none" stroke="#15365d" stroke-width="3.500" stroke-linecap="round"/></svg></div>
    <div class="app"><svg viewBox="0 0 64 64" color="#fff"><rect width="64" height="64" rx="14" fill="url(#gTv)"/><use href="#i-apple" x="9" y="19" width="19" height="23"/><text x="29" y="42" font-size="26" font-weight="600" fill="#fff">tv</text></svg></div>
    <div class="app"><svg viewBox="0 0 64 64"><rect width="64" height="64" rx="14" fill="url(#gMusic)"/><path d="M24 17l22-6v30q0 7-7 7-6 0-6-5t8-6V21l-13 4v20q0 7-8 7-6 0-6-5t10-6z" fill="#fff"/></svg></div>
    <div class="app"><svg viewBox="0 0 64 64"><rect width="64" height="64" rx="14" fill="#fff"/><path d="M14 13h12l25 34v3H39L14 17zM37 13h14v18zM14 33v18h14z" fill="#e8506a"/></svg></div>
    <div class="app"><svg viewBox="0 0 64 64"><rect width="64" height="64" rx="14" fill="url(#gStore)"/><path d="M28 15l18 32M36 15 22 40M12 40h20M44 40h8M18 46l-2 4" stroke="#fff" stroke-width="4.600" stroke-linecap="round"/></svg></div>
    <div class="app"><svg viewBox="0 0 64 64"><rect width="64" height="64" rx="14" fill="url(#gGear)"/><circle cx="32" cy="32" r="27" fill="#2e2e2e"/><circle cx="32" cy="32" r="24" fill="none" stroke="#999" stroke-width="2.500" stroke-dasharray="1.300 1.100"/><circle cx="32" cy="32" r="19.500" fill="#5d5e5f" stroke="#9a9a9a" stroke-width="1.500"/><circle cx="32" cy="32" r="16" fill="none" stroke="#222" stroke-width="2"/><path d="M32 32h18M32 32 23 16.500M32 32 23 47.500" stroke="#b5b7b8" stroke-width="3"/><circle cx="32" cy="32" r="3.500" fill="#333"/></svg><b class="badge">1</b></div>
    <div class="dsep"></div>
    <div class="app on"><svg viewBox="0 0 64 64"><rect width="64" height="64" rx="14" fill="#f3f3f5"/><circle cx="32" cy="32" r="27.500" fill="#f4bd42"/><path d="M55.800 18.200H32L20.500 38 8.200 18.200A27.500 27.500 0 0 1 55.800 18.200z" fill="#d9463a"/><path d="M8.200 18.200A27.500 27.500 0 0 0 32 59.500L44 39 32 44 20 38z" fill="#4a9d54"/><circle cx="32" cy="32" r="13.500" fill="#fff"/><circle cx="32" cy="32" r="10.800" fill="#3f7ce8"/></svg></div>
    <div class="app on"><svg viewBox="0 0 64 64"><rect width="64" height="64" rx="14" fill="#fff"/><path d="M9 39l33-29v14L14 45z" fill="#2660a3"/><path d="M9 25l5-5 28 20v14z" fill="#3480cd"/><path d="M42 10l12 6v32l-12 6z" fill="#4697e5"/></svg></div>
    <div class="app on"><svg viewBox="0 0 64 64"><rect width="64" height="64" rx="14" fill="#242424"/><path d="M31 9h-8a7.500 7.500 0 0 0 0 15.500h8z" fill="#ee6b41"/><path d="M31 9h8a7.500 7.500 0 0 1 0 15.500h-8z" fill="#ee8778"/><path d="M31 24.500h-8a7.500 7.500 0 0 0 0 15.500h8z" fill="#9b62f2"/><circle cx="39" cy="32" r="7.600" fill="#5bbbf7"/><path d="M31 40h-8a7.500 7.500 0 1 0 8 8z" fill="#62d596"/></svg></div>
    <div class="app on"><svg viewBox="0 0 64 64"><rect width="64" height="64" rx="14" fill="#c6ced0"/><rect x="2" y="2" width="60" height="60" rx="12" fill="#050505"/><rect x="7" y="7" width="50" height="50" rx="8" fill="#252525"/><path d="M12 12l7 4.500-7 4.500M21 24h10" fill="none" stroke="#fff" stroke-width="2"/></svg></div>
    <div class="app on"><svg class="big"><use href="#i-xcode"/></svg></div>
    <div class="app on"><svg viewBox="0 0 64 64"><g clip-path="url(#tile)"><rect width="64" height="64" fill="#f6f6f6"/><path d="M40 0h12v64H40zM56 0h8v64h-8z" fill="#d42d2d"/></g><rect x="10" y="16" width="45" height="30" rx="2" fill="#3586e3"/><path d="M10 30q20 10 45-14v28H10z" fill="#2467ca"/><path d="M6 46h52v2H6z" fill="#39516f"/><path d="M31 23h12v11h-9v5H22V28h9z" fill="#e9f2fd"/><ellipse cx="8" cy="8" rx="2.500" ry="2.500" fill="#40104f"/></svg></div>
    <div class="app on"><svg viewBox="0 0 64 64"><path d="M0 0h31v31H0zM33 0h31v31H33zM0 33h31v31H0zM33 33h31v31H33z" fill="#3982e8"/></svg></div>
    <div class="app on"><svg><use href="#i-android"/></svg></div>
    <div class="app on"><svg viewBox="0 0 64 64"><use href="#i-xblue" width="64" height="64"/><path d="M47 16q1-2 3-1l15 8q2 1 1 4L48 65q-2 3-4 1l-16-10q-3-2-2-4z" fill="#131313"/><path d="M37 32l14 20M34 41l20-4" stroke="#dedede" stroke-width="4" stroke-linecap="round"/></svg></div>
    <div class="app on"><svg class="big"><use href="#i-edge"/></svg></div>
    <div class="dsep two"></div>
    <div class="app"><svg class="wide" viewBox="0 0 65 66"><path d="M7 10q0-3 3-3h45q3 0 3 3v15H7z" fill="#3b96cf"/><path d="M10 0h20q6 2 10 10t12 13H10z" fill="#f2f2f3"/><path d="M0 15q0-4 4-4h16l6 6h35q4 0 4 4v10H0z" fill="#49a5dd"/><rect y="20" width="65" height="46" rx="4" fill="url(#gFolder)"/></svg></div>
    <div class="app mini"><svg viewBox="0 0 74 58"><rect y="2" width="74" height="42" fill="#232329"/><path d="M2 8h8M2 11h6M2 14h7M14 8h8M16 20h10M18 24h12M16 28h8" stroke="#5c5f68"/><path d="M34 7h27v30H34z" fill="#50545b"/><rect x="41" y="9" width="14" height="27" rx="2" fill="#fff"/><path d="M42 12h12" stroke="#222"/><use href="#i-xcode" x="47" y="32" width="27" height="27"/></svg></div>
    <div class="app mini"><svg viewBox="0 0 74 58"><rect y="2" width="74" height="42" fill="#f7f7f7"/><path d="M0 2h74v3H0z" fill="#343237"/><text x="4" y="20" font-size="5" font-weight="700">Parallels</text><text x="4" y="25.500" font-size="5" font-weight="700">Desktop 19</text><rect x="34" y="12" width="18" height="20" rx="3" fill="#ddd"/><path d="M45 13h5v17h-5z" fill="#d02c2c"/><rect x="36" y="17" width="12" height="9" fill="#2c74d2"/><use href="#i-finder" x="49" y="33" width="24" height="24"/></svg></div>
    <div class="app mini"><svg viewBox="0 0 74 58"><rect y="2" width="74" height="42" fill="#38393c"/><path d="M17 7h56v22H17z" fill="#294885"/><path d="M2 8h10M2 11h8M2 14h9M2 17h7M19 11h18M19 15h14M19 19h22" stroke="#667f9e"/><path d="M18 32h16M18 36h10" stroke="#727452"/><use href="#i-android" x="49" y="34" width="24" height="24"/></svg></div>
    <div class="app mini"><svg viewBox="0 0 74 58"><path d="M0-2h74v48H0z" fill="#0c1119"/><path d="M0-2h18v48H0z" fill="#55575b"/><path d="M0-2h74v3H0z" fill="#383b40"/><path d="M20 6h50M20 9h40M22 16h10M45 16h12M22 20h8M45 20h10M22 38h40M22 42h30" stroke="#8d949d" stroke-width=".7"/><path d="M20 24h53v7H20z" fill="#1c2c49"/><use href="#i-safari" x="49" y="34" width="24" height="24"/></svg></div>
    <div class="app"><svg class="bin" viewBox="0 0 58 72"><path d="M6 10l8-9 8 5 8-5 10 4 6-2 8 9-6 8H10z" fill="#e9e9e9"/><path d="M14 8l7 5M24 4l3 10M38 5l-5 9M45 8l-5 5" stroke="#3a4552" stroke-width="2"/><path d="M22 8l6 2-3 3z" fill="#3c95c7"/><path d="M33 9l5 2-5 2z" fill="#b4472f"/><path d="M0 9q1 6 29 6T58 9l-7 56q-1 7-22 7T7 65z" fill="url(#gTrash)"/><path d="M0 9q0 7 29 7t29-7" fill="none" stroke="#aaadaf" stroke-width="1.500"/></svg></div>
  </div>
</footer>
</body>
</html>
```
FILE: styles.css
```css
* { box-sizing: border-box; }
html, body { margin: 0; }
body {
  width: 3024px;
  height: 1964px;
  overflow: hidden;
  display: flex;
  flex-direction: column;
  background: #08020f;
  font-family: Inter, sans-serif;
}
svg { display: block; flex: none; overflow: visible; }
.defs { position: absolute; }
button { border: 0; padding: 0; font: inherit; }

/* macOS menu bar */
.menubar {
  height: 75px;
  flex: none;
  display: flex;
  align-items: center;
  padding: 0 34px 3px 40px;
  background: linear-gradient(90deg, #47138e 0, #3f1398 600px, #3310a6 1150px, #2b0ca1 1950px, #2a0a91 100%);
  color: #ece8f6;
}
.apple { margin-top: -3px; }
.mac-menus { display: flex; gap: 41px; margin-left: 40px; font-size: 26px; font-weight: 500; letter-spacing: -.5px; white-space: nowrap; }
.mac-menus b { font-weight: 700; letter-spacing: .3px; }
.mac-status { margin-left: auto; display: flex; align-items: center; }
.mac-status > * { margin-left: 38px; }
.mac-status > :nth-child(3) { margin-left: 33px; }
.mac-status > :nth-child(5) { margin-left: 43px; }
.mac-status .pct { font-size: 22px; font-weight: 500; width: 48px; letter-spacing: -.5px; white-space: nowrap; }
.mac-status > :nth-child(7) { margin-left: 9px; }
.mac-status > :nth-child(8) { margin-left: 37px; }
.mac-status > :nth-child(9) { margin-left: 39px; }
.mac-status > :nth-child(10) { margin-left: 39px; }
.mac-status .clock { margin-left: 36px; width: 253px; font-size: 26px; font-weight: 500; letter-spacing: .3px; white-space: nowrap; }

/* Virtual machine window */
.vm { height: 1775px; flex: none; display: flex; flex-direction: column; background: #f7f7f7; border-radius: 20px 20px 0 0; overflow: hidden; }
.vm-title {
  height: 78px;
  flex: none;
  display: flex;
  align-items: center;
  padding: 0 16px 0 26px;
  background: #38363c;
  border-top: 1px solid #000;
  border-bottom: 1px solid #000;
  border-radius: 20px 20px 0 0;
  box-shadow: inset 0 2px 0 #737277;
}
.lights { display: flex; gap: 16px; width: 1399px; }
.lights i { width: 24px; height: 24px; border-radius: 50%; }
.r { background: #ed6a5e; }
.y { background: #f5bf4f; }
.g { background: #61c554; }
.b { background: #67b3ef; }
.vm-name { width: 687px; font-size: 31px; font-weight: 400; letter-spacing: .1px; color: #b1b0b4; }
.vm-tools { display: flex; }
.vm-tools svg { width: 64px; height: 36px; fill: none; stroke: #b4b3b8; stroke-width: 2.2; }
.tri { margin-left: 11px; }
.gear { margin-left: 20px; }
.buy { margin-left: auto; width: 148px; height: 46px; padding-bottom: 2px; border-radius: 11px; background: linear-gradient(#7abd45, #64ae34 40%, #5fae34); color: #f0f5ea; font-size: 27px; letter-spacing: -.5px; }

/* Browser tab strip */
.tabs { height: 63px; flex: none; display: flex; align-items: center; background: #cdcdcd; font: 23px "Open Sans", sans-serif; color: #111; box-shadow: inset 0 -1px 0 #bababa; }
.tab-actions { margin-left: 34px; }
.tab-sep { width: 2px; height: 40px; margin-left: 32px; background: #767676; }
.tab { display: flex; align-items: center; height: 63px; white-space: nowrap; letter-spacing: -.08px; }
.tab .x { margin-left: auto; }
.tab span { padding-bottom: 2px; }
.idle { width: 476px; padding: 0 21px 0 25px; }
.idle span { margin-left: 24px; }
.active { width: 480px; background: #f7f7f7; border-radius: 10px 10px 0 0; padding: 0 23px 0 23px; }
.active span { margin-left: 21px; letter-spacing: 0; }
.plus { margin-left: 21px; }
.win-buttons { margin-left: auto; display: flex; gap: 70px; padding-right: 35px; }

/* Address bar */
.address { height: 76px; flex: none; display: flex; align-items: center; background: #f7f7f7; font-family: "Open Sans", sans-serif; }
.nav { margin-left: 40px; }
.nav2 { margin-left: 56px; }
.url { margin-left: 40px; width: 2294px; height: 60px; border-radius: 30px; background: #fff; box-shadow: 0 0 6px rgba(0, 0, 0, .06); display: flex; align-items: center; padding: 0 32px 0 39px; font-size: 27px; color: #707070; }
.url span { margin-left: 32px; padding-bottom: 1px; letter-spacing: -.17px; }
.url em { font-style: normal; color: #000; }
.read { margin-left: auto; }
.edge-tools { display: flex; gap: 56px; margin-left: 39px; }
.guest { margin-left: 31px; width: 152px; height: 56px; border: 2px solid #000; border-radius: 28px; display: flex; align-items: center; justify-content: space-between; padding: 0 4px 0 25px; font-size: 23px; letter-spacing: -.4px; }
.dots { margin-left: 37px; }

/* Web page */
.viewport { height: 1454px; flex: none; margin: 0 8px; border-radius: 16px; overflow: hidden; display: flex; background: #fcfcfc; }
.page {
  width: 2978px;
  display: flex;
  flex-direction: column;
  padding: 16px 0 0 349px;
  background: linear-gradient(140deg, #4a7a9e 0, #507f9e 6.5%, #65909f 28%, #7ea1a3 49%, #95b0a7 63%, #b0c4ae 85%, #c6d2b1 100%);
}
.ad { width: 1456px; height: 180px; margin-left: 412px; flex: none; background: #fff; border: 2px solid #e4e4e4; display: flex; }
.ad-choice { width: 43px; display: flex; flex-direction: column; gap: 11px; padding: 116px 0 0 4px; }
.ad-choice svg + svg { margin-left: 1px; margin-top: -2px; }
.ad-copy { width: 1032px; display: flex; flex-direction: column; font-family: Lato, sans-serif; white-space: nowrap; }
.ad-copy span { margin-top: 31px; font-size: 31px; line-height: 40px; color: #757575; letter-spacing: .6px; }
.ad-copy strong { margin-top: -1px; font-size: 60px; line-height: 72px; font-weight: 500; color: #424242; letter-spacing: .5px; -webkit-text-stroke: .7px #424242; }
.install { width: 347px; height: 81px; margin-top: 48px; border-radius: 41px; background: #1d3473; color: #fff; display: flex; align-items: center; gap: 28px; padding-left: 72px; font: 500 41px Roboto, sans-serif; }
.install span { width: 153px; letter-spacing: -.3px; text-align: left; }
.notepad { width: 2280px; flex: 1; margin-top: 26px; display: flex; flex-direction: column; background: #fff; border-radius: 10px 10px 0 0; box-shadow: 0 0 0 2px rgba(0, 0, 0, .2), 0 10px 60px rgba(0, 0, 0, .35); }
.notepad h1 { margin: 0; height: 80px; border-bottom: 2px solid #c2c2c2; border-radius: 10px 10px 0 0; background: linear-gradient(#e6e6e6, #d7d7d7); box-shadow: inset 0 2px 0 #ececec; font: 700 29px/75px "Open Sans", sans-serif; letter-spacing: .8px; color: #444; text-align: center; }
.np-menu { height: 70px; display: flex; gap: 39px; padding: 0 0 1px 22px; align-items: center; background: #fafafa; border-bottom: 2px solid #e5e5e5; font: 28px "Liberation Sans", Arial, sans-serif; color: #333; }
.np-menu span { display: flex; align-items: center; gap: 9px; }
.np-menu svg, .sel svg { width: 16px; height: 8px; }
.np-tools { height: 74px; display: flex; align-items: center; padding: 4px 0 0 2px; background: #fafafa; border-bottom: 2px solid #c4c4c4; }
.grp { display: flex; align-items: center; height: 60px; padding-right: 4px; }
.grp + .grp { border-left: 2px solid #d9d9d9; padding-left: 4px; }
.grp > svg { width: 32px; height: 32px; margin: 0 20px; }
.selects { width: 498px; font: 28px "Liberation Sans", Arial, sans-serif; color: #333; }
.sel { display: flex; align-items: center; justify-content: space-between; padding-left: 20px; }
.fam { width: 224px; }
.siz { width: 244px; padding-left: 40px; }
.np-body { padding: 20px 18px; font: 30.4px/48px Lato, sans-serif; word-spacing: -2.5px; color: #000; }
.np-body p { margin: 0 0 24px; }
.np-body u { text-decoration: underline wavy #e8372c 2px; text-underline-offset: 2px; text-decoration-skip-ink: none; }
.scroll { width: 30px; display: flex; flex-direction: column; align-items: center; padding: 17px 0; box-shadow: inset -1px 0 0 #e2e2e2; }
.thumb { width: 18px; height: 783px; margin-top: 16px; border-radius: 9px; background: #8b8b8b; }
.down { margin-top: auto; }

/* Windows taskbar */
.taskbar { flex: none; height: 96px; margin-top: 8px; border-top: 2px solid #b3b9c6; display: flex; align-items: center; background: linear-gradient(rgba(190, 200, 215, 0) 40%, rgba(175, 180, 195, .45)), linear-gradient(90deg, #e3ecf8 0, #e0ebf6 300px, #d5e0f7 780px, #dadff2 1080px, #d6e0f8 1240px, #dde0ef 1560px, #dae3f8 2000px, #dce4f1 2350px, #e3edf6 2700px, #e6eff8 100%); font-family: "Open Sans", sans-serif; color: #1b1b1b; padding-bottom: 1px; }
.widgets { width: 1044px; padding-left: 20px; }
.pins { display: flex; align-items: center; }
.search { width: 438px; height: 62px; margin: 0 25px 0 28px; border-radius: 31px; background: linear-gradient(#f1f5fd, #eceef2); border: 1px solid #c9d0df; border-bottom: 2px solid #b4bac8; display: flex; align-items: center; padding: 0 23px 0 22px; font-size: 27px; color: #5b5d62; }
.search span { margin: 0 auto 0 21px; }
.pins > svg + svg { margin-left: 40px; }
.pins > svg:nth-child(6) { margin-left: 41px; }
.pin-active { width: 76px; height: 77px; margin-left: 27px; border-radius: 8px; background: linear-gradient(#edf1fb, #e3e5ec); border: 1px solid #ccd2e0; display: flex; flex-direction: column; align-items: center; padding-top: 14px; }
.pin-active i { width: 32px; height: 6px; margin-top: 8px; border-radius: 3px; background: #2b68b8; }
.tray { display: flex; align-items: center; margin-left: auto; padding-right: 41px; }
.mon { margin: 0 15px 0 37px; }
.tray svg:nth-child(4) { margin-left: 14px; }
.time { width: 155px; display: flex; flex-direction: column; align-items: flex-end; font-size: 23px; line-height: 32px; letter-spacing: .05px; margin-right: 18px; padding-bottom: 2px; }

/* macOS dock */
.dock-area { flex: 1; display: flex; padding: 4px 65px 10px; background: linear-gradient(90deg, #0d0328 0, #050108 200px, #0c0226 900px, #170540 1700px, #350a62 2150px, #2a0850 2400px, #12033a 2750px, #0b0225 100%); }
.dock { flex: 1; display: flex; align-items: center; padding: 0 0 8px 3px; border: 2px solid #463a5a; border-radius: 28px; background: linear-gradient(90deg, #1c142e 0, #1d1331 1300px, #281445 1700px, #3a1355 1900px, #3b1456 2250px, #2a143f 2450px, #20143a 100%); }
.app { position: relative; width: 82.6px; flex: none; height: 88px; display: flex; justify-content: center; align-items: center; }
.app > svg { width: 63px; height: 64px; }
.app > svg.big { width: 74px; height: 74px; }
.app > svg.wide { width: 65px; height: 66px; }
.app > svg.bin { width: 58px; height: 72px; }
.mini > svg { width: 74px; height: 58px; margin-top: 8px; }
.app.on::after { content: ""; position: absolute; left: 36px; top: 85px; width: 8px; height: 8px; border-radius: 50%; background: #a596bd; }
.badge { position: absolute; right: 1px; top: 7px; width: 28px; height: 28px; border-radius: 50%; background: #e0493c; color: #fff; font-size: 17px; font-weight: 500; line-height: 28px; text-align: center; }
.dsep { width: 2px; height: 72px; margin: 0 15px 0 20px; background: #51446b; flex: none; }
.dsep.two { margin: 0 14px 0 20px; background: #6a5285; }
```
